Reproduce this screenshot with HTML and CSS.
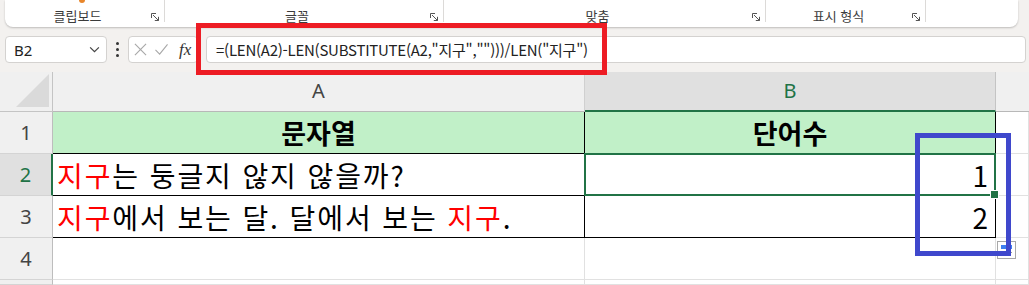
FILE: index.html
```html
<!DOCTYPE html>
<html lang="ko">
<head>
<meta charset="utf-8">
<title>Excel</title>
<link rel="stylesheet" href="styles.css">
</head>
<body>
<div class="app">
  <div class="ribbon">
    <div class="grp g1"><span class="peek"></span><span class="lbl">클립보드</span><svg class="launch" viewBox="0 0 9 9"><path d="M0.5 5V0.5H5M2 2L7.5 7.5M7.5 3.8V7.5H3.8"/></svg></div>
    <div class="grp g2"><span class="lbl">글꼴</span><svg class="launch" viewBox="0 0 9 9"><path d="M0.5 5V0.5H5M2 2L7.5 7.5M7.5 3.8V7.5H3.8"/></svg></div>
    <div class="grp g3"><span class="lbl">맞춤</span><svg class="launch" viewBox="0 0 9 9"><path d="M0.5 5V0.5H5M2 2L7.5 7.5M7.5 3.8V7.5H3.8"/></svg></div>
    <div class="grp g4"><span class="lbl">표시 형식</span><svg class="launch" viewBox="0 0 9 9"><path d="M0.5 5V0.5H5M2 2L7.5 7.5M7.5 3.8V7.5H3.8"/></svg></div>
    <div class="grp g5"></div>
  </div>

  <div class="fbar">
    <div class="namebox"><span class="nb-text">B2</span><svg class="chev" viewBox="0 0 12 8"><path d="M1 1.5L6 6.5L11 1.5"/></svg></div>
    <div class="vdots"><i></i><i></i><i></i></div>
    <div class="fnbox">
      <svg class="fi" viewBox="0 0 14 14"><path d="M1 1L13 13M13 1L1 13"/></svg>
      <svg class="fi" viewBox="0 0 14 14"><path d="M0.5 7.5L5 12L13.5 1.5"/></svg>
      <span class="fx">fx</span>
    </div>
    <div class="finput"><span>=(LEN(A2)-LEN(SUBSTITUTE(A2,"지구","")))/LEN("지구")</span></div>
  </div>

  <div class="sheet">
    <div class="corner"><div class="tri"></div></div>
    <div class="colh">A</div>
    <div class="colh colsel">B</div>
    <div class="colh colx"></div>

    <div class="rowh">1</div>
    <div class="cell tb head"><span>문자열</span></div>
    <div class="cell tb head"><span>단어수</span></div>
    <div class="cell"></div>

    <div class="rowh rowsel">2</div>
    <div class="cell tb txt"><span><span class="red">지구</span>는 둥글지 않지 않을까?</span></div>
    <div class="cell tb num sel">1</div>
    <div class="cell"></div>

    <div class="rowh">3</div>
    <div class="cell tb txt"><span><span class="red">지구</span>에서 보는 달. 달에서 보는 <span class="red">지구</span>.</span></div>
    <div class="cell tb num">2</div>
    <div class="cell"></div>

    <div class="rowh">4</div>
    <div class="cell"></div>
    <div class="cell"></div>
    <div class="cell"></div>

    <div class="rowh"></div>
    <div class="cell"></div>
    <div class="cell"></div>
    <div class="cell"></div>
  </div>

  <div class="paste"><i class="pb"></i><i class="pl"></i></div>
  <div class="ann red-box"></div>
  <div class="ann blue-box"></div>
</div>
</body>
</html>
```

FILE: styles.css
```css
* { box-sizing: border-box; }
html, body { margin: 0; padding: 0; }
body {
  width: 1029px;
  height: 285px;
  overflow: hidden;
  background: #f3f1ef;
  font-family: "Noto Sans CJK KR", "Noto Sans", sans-serif;
}
.app { position: relative; width: 1029px; height: 285px; overflow: hidden; }

/* Ribbon */
.ribbon {
  display: flex;
  height: 27px;
  margin: 0 11px 0 5px;
  background: #fff;
  border-radius: 0 0 8px 8px;
  box-shadow: 0 1px 2px rgba(0,0,0,0.22);
}
.grp {
  position: relative;
  display: flex;
  align-items: center;
  justify-content: center;
  height: 22px;
  padding: 9px 14px 0 0;
  border-right: 1px solid #dcdad8;
}
.g1 { width: 160px; }
.g2 { width: 279px; }
.g3 { width: 322px; }
.g4 { width: 160px; }
.g5 { flex: 1; border-right: 0; }
.lbl { font-size: 13px; color: #3b3b3b; line-height: 1; }
.launch {
  position: absolute;
  right: 4px;
  top: 13px;
  width: 9px;
  height: 9px;
  fill: none;
  stroke: #555;
  stroke-width: 1;
}
.peek {
  position: absolute;
  left: 74px;
  top: 0;
  width: 6px;
  height: 3px;
  background: #e8862a;
  border-radius: 0 0 3px 3px;
}

/* Formula bar */
.fbar {
  display: flex;
  align-items: center;
  height: 27px;
  margin-top: 9px;
  padding-left: 5px;
}
.namebox, .fnbox, .finput {
  height: 27px;
  background: #fff;
  border: 1px solid #d4d2d0;
  border-radius: 4px;
}
.namebox {
  width: 102px;
  display: flex;
  align-items: center;
  justify-content: space-between;
  padding: 0 6px 0 8px;
}
.nb-text { font-family: "Noto Sans", sans-serif; font-size: 15px; color: #222; }
.chev { width: 11px; height: 7px; fill: none; stroke: #444; stroke-width: 1.4; }
.vdots {
  width: 21px;
  display: flex;
  flex-direction: column;
  align-items: center;
  gap: 3px;
}
.vdots i { width: 3px; height: 3px; background: #333; border-radius: 50%; }
.fnbox {
  width: 70px;
  display: flex;
  align-items: center;
  padding-left: 5px;
  gap: 8px;
}
.fi { width: 13px; height: 13px; fill: none; stroke: #a8a8a8; stroke-width: 1.2; }
.fx {
  font-family: "Liberation Serif", serif;
  font-style: italic;
  font-size: 17px;
  color: #333;
  margin-left: 3px;
}
.finput {
  flex: 1;
  margin-left: 8px;
  margin-right: 3px;
  display: flex;
  align-items: center;
  padding-left: 9px;
  font-size: 15px;
  letter-spacing: -0.25px;
  color: #222;
  white-space: nowrap;
}

/* Sheet */
.sheet {
  margin-top: 9px;
  display: grid;
  grid-template-columns: 53px 532px 411px 33px;
  grid-template-rows: 40px 42px 42px 42px 42px 5px;
  background: #fff;
}
.corner {
  background: #f0f0f0;
  border-right: 1px solid #c4c4c4;
  border-bottom: 1px solid #c4c4c4;
  display: flex;
  align-items: flex-end;
  justify-content: flex-end;
  padding: 0 3px 4px 0;
}
.tri {
  width: 33px;
  height: 33px;
  background: #dadada;
  clip-path: polygon(100% 0, 100% 100%, 0 100%);
}
.colh {
  background: #f0f0f0;
  border-right: 1px solid #d0d0d0;
  border-bottom: 1px solid #b8b8b8;
  display: flex;
  align-items: center;
  justify-content: center;
  font-family: "Noto Sans", sans-serif;
  font-size: 20px;
  color: #444;
  padding-bottom: 2px;
}
.colsel {
  background: #e0e0e0;
  color: #217346;
  border-bottom: 2px solid #217346;
  border-right-color: #c4c4c4;
}
.colx { border-right: 0; }
.rowh {
  background: #f0f0f0;
  border-right: 1px solid #bdbdbd;
  border-bottom: 1px solid #d4d4d4;
  display: flex;
  align-items: center;
  justify-content: center;
  font-family: "Noto Sans", sans-serif;
  font-size: 20px;
  color: #444;
}
.rowsel {
  background: #e0e0e0;
  color: #217346;
  border-right: 2px solid #217346;
}
.cell {
  border-right: 1px solid #e1e1e1;
  border-bottom: 1px solid #e1e1e1;
  display: flex;
  align-items: center;
  font-size: 28px;
  color: #000;
  white-space: nowrap;
  position: relative;
}
.tb { border-right-color: #000; border-bottom-color: #000; }
.head {
  background: #c1f0c8;
  justify-content: center;
  font-weight: bold;
  font-size: 27px;
}
.txt { padding-left: 4px; letter-spacing: 1.9px; }
.num { justify-content: flex-end; padding-right: 7px; font-size: 28px; }
.red { color: #ff0000; }
.sel::after {
  content: "";
  position: absolute;
  left: -1px;
  top: -1px;
  right: -1px;
  bottom: -1px;
  border: 2px solid #217346;
}
.sel::before {
  content: "";
  position: absolute;
  right: -4px;
  bottom: -4px;
  width: 7px;
  height: 7px;
  background: #217346;
  border: 1px solid #fff;
  z-index: 2;
}

/* Overlays */
.paste {
  position: absolute;
  left: 997px;
  top: 241px;
  width: 19px;
  height: 18px;
  background: #fff;
  border: 1px solid #a8a8a8;
}
.pb {
  position: absolute;
  left: 3px;
  top: 3px;
  width: 11px;
  height: 4px;
  background: #3d7ff0;
}
.pl {
  position: absolute;
  left: 3px;
  top: 10px;
  width: 11px;
  height: 1px;
  background: #9a9a9a;
}
.ann { position: absolute; pointer-events: none; }
.red-box {
  left: 196px;
  top: 23px;
  width: 411px;
  height: 52px;
  border: 5px solid #ed1c24;
}
.blue-box {
  left: 915px;
  top: 133px;
  width: 96px;
  height: 123px;
  border: 5px solid #3f48cc;
}
```
